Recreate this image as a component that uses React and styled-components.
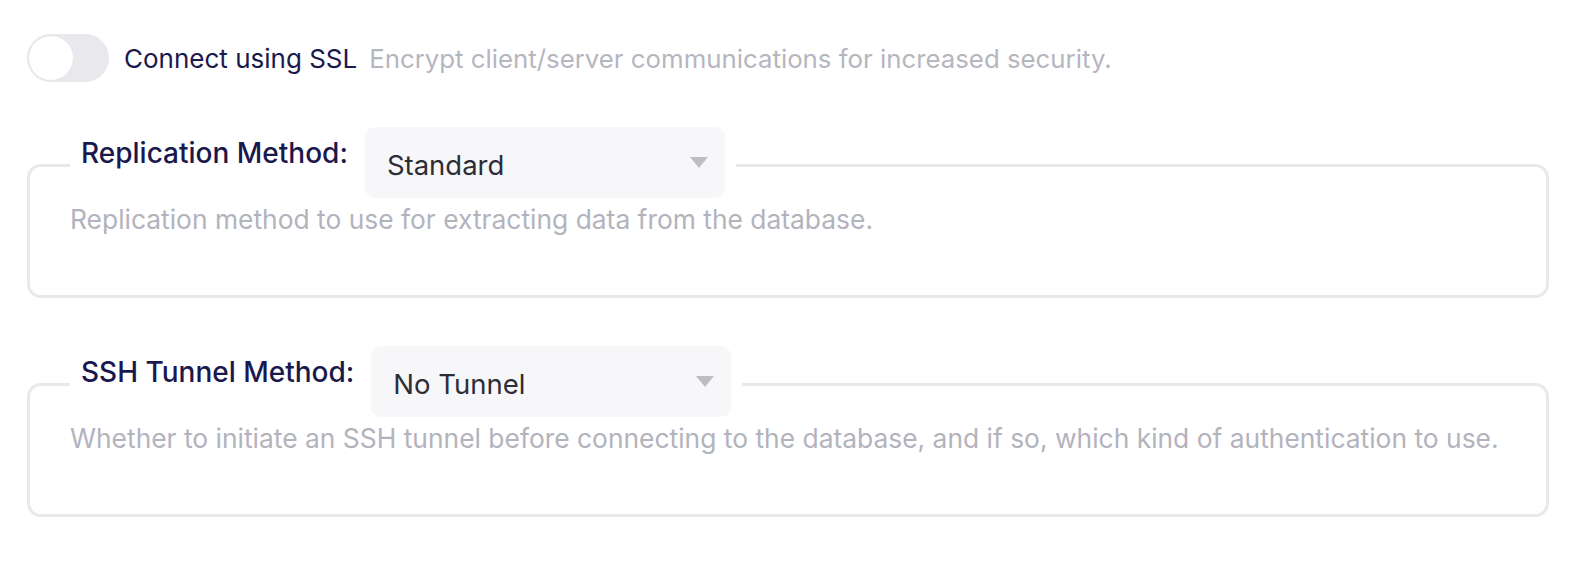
import React from "react";
import styled, { createGlobalStyle } from "styled-components";

const GlobalStyle = createGlobalStyle`
  html, body {
    margin: 0;
    padding: 0;
    background: #ffffff;
    font-family: Inter, "Noto Sans", "Liberation Sans", sans-serif;
  }
  * { box-sizing: border-box; }
`;

const Page = styled.div`
  padding: 34px 29px 30px 27px;
  display: flex;
  flex-direction: column;
`;

const SwitchRow = styled.div`
  display: flex;
  align-items: center;
  gap: 15px;
  margin-bottom: 45px;
`;

const Track = styled.div`
  width: 82px;
  height: 48px;
  border-radius: 24px;
  background: ${(p) => (p.on ? "#615eff" : "#e8e8ed")};
  padding: 1px;
  display: flex;
  flex-shrink: 0;
`;

const Knob = styled.div`
  width: 46px;
  height: 46px;
  border-radius: 50%;
  background: #ffffff;
  border: 1px solid #e6e6ea;
`;

const SwitchText = styled.div`
  display: flex;
  align-items: baseline;
  gap: 12px;
`;

const SwitchLabel = styled.span`
  font-size: 26px;
  color: #1a194d;
`;

const Hint = styled.span`
  font-size: 25.8px;
  color: #b6b6bf;
`;

const Group = styled.fieldset`
  margin: 0 0 48px 0;
  padding: 0 40px 0 40px;
  border: 3px solid #e8e8ed;
  border-radius: 14px;
  min-height: 171px;
  &:last-child { margin-bottom: 0; }
`;

const Legend = styled.legend`
  padding: 0 11px 6px 11px;
  display: flex;
  align-items: flex-start;
  gap: 17px;
`;

const GroupLabel = styled.span`
  font-size: 28px;
  font-weight: 500;
  line-height: 36px;
  padding-top: 8px;
  color: #1a194d;
`;

const Select = styled.div`
  width: 360px;
  height: 71px;
  background: #f7f7f9;
  border-radius: 10px;
  padding: 4px 17px 0 22px;
  display: flex;
  align-items: center;
  justify-content: space-between;
  font-size: 27.5px;
  color: #2d2d36;
`;

const Caret = styled.svg`
  width: 18px;
  height: 11px;
  fill: #bdbdc4;
  margin-bottom: 4px;
`;

const Description = styled.div`
  font-size: 26.4px;
  line-height: 30px;
  color: #b3b3bd;
`;

const fields = [
  {
    label: "Replication Method:",
    value: "Standard",
    description: "Replication method to use for extracting data from the database.",
  },
  {
    label: "SSH Tunnel Method:",
    value: "No Tunnel",
    description:
      "Whether to initiate an SSH tunnel before connecting to the database, and if so, which kind of authentication to use.",
  },
];

export default function App() {
  return (
    <>
      <GlobalStyle />
      <Page>
        <SwitchRow>
          <Track>
            <Knob />
          </Track>
          <SwitchText>
            <SwitchLabel>Connect using SSL</SwitchLabel>
            <Hint>Encrypt client/server communications for increased security.</Hint>
          </SwitchText>
        </SwitchRow>
        {fields.map((f) => (
          <Group key={f.label}>
            <Legend>
              <GroupLabel>{f.label}</GroupLabel>
              <Select>
                {f.value}
                <Caret viewBox="0 0 18 11">
                  <path d="M0 0 H18 L9 11 Z" />
                </Caret>
              </Select>
            </Legend>
            <Description>{f.description}</Description>
          </Group>
        ))}
      </Page>
    </>
  );
}
